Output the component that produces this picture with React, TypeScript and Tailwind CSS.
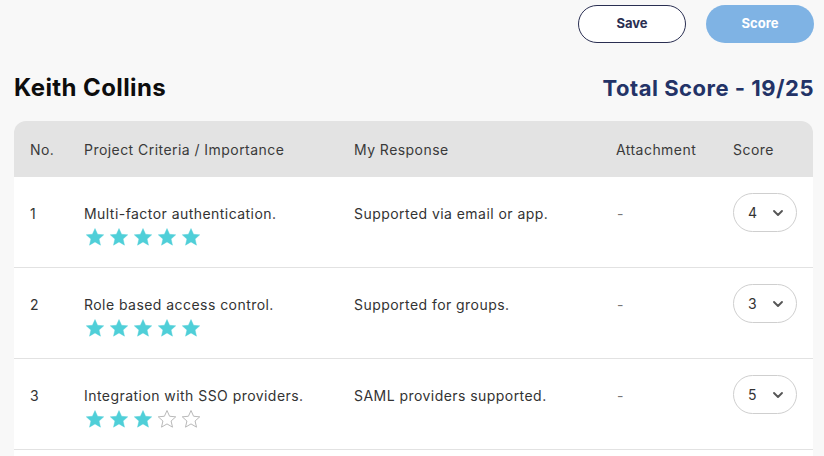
import React from "react";

const rows = [
  { no: "1", crit: "Multi-factor authentication.", stars: 5, resp: "Supported via email or app.", score: "4" },
  { no: "2", crit: "Role based access control.", stars: 5, resp: "Supported for groups.", score: "3" },
  { no: "3", crit: "Integration with SSO providers.", stars: 3, resp: "SAML providers supported.", score: "5" },
];

function Star({ filled }: { filled: boolean }) {
  return (
    <svg width="20" height="20" viewBox="0 0 24 24" className="shrink-0">
      <path
        d="M12 1.8l3.1 6.9 7.4.7-5.6 5 1.7 7.4L12 17.9l-6.6 3.9 1.7-7.4-5.6-5 7.4-.7z"
        fill={filled ? "#4fcfd8" : "none"}
        stroke={filled ? "#4fcfd8" : "#b9b9b9"}
        strokeWidth={filled ? 0.5 : 1.2}
        strokeLinejoin="round"
      />
    </svg>
  );
}

export default function App() {
  return (
    <div className="min-h-[456px] w-[824px] bg-[#f8f8f8] overflow-hidden" style={{ fontFamily: "Inter, 'Noto Sans', sans-serif" }}>
      <div className="flex justify-end gap-5 pt-[5px] pr-[10px]">
        <button className="h-[38px] w-[108px] rounded-full border border-[#2a2f52] bg-white text-[13px] font-bold text-[#2a2f52]">
          Save
        </button>
        <button className="h-[38px] w-[108px] rounded-full bg-[#7fb3e4] text-[13px] font-bold text-white">
          Score
        </button>
      </div>
      <div className="flex items-center justify-between pl-[14px] pr-[10px] mt-[27px]">
        <div className="text-[24px] font-bold text-[#0d0d0d] tracking-[0.4px]">Keith Collins</div>
        <div className="text-[22px] font-bold text-[#233367] tracking-[0.5px]">Total Score - 19/25</div>
      </div>
      <div className="ml-[14px] mt-[15px] w-[799px]">
        <div className="flex h-[56px] items-center rounded-t-[12px] bg-[#e3e3e3] text-[14px] tracking-[0.45px] text-[#3a3a3a]">
          <div className="w-[70px] pl-[16px]">No.</div>
          <div className="w-[270px]">Project Criteria / Importance</div>
          <div className="w-[262px]">My Response</div>
          <div className="w-[117px]">Attachment</div>
          <div className="w-[80px]">Score</div>
        </div>
        {rows.map((r) => (
          <div key={r.no} className="flex h-[91px] items-start border-b border-[#e2e2e2] bg-white text-[14px] tracking-[0.45px] text-[#333]">
            <div className="w-[70px] pl-[16px] pt-[26px]">{r.no}</div>
            <div className="w-[270px] pt-[26px]">
              <div>{r.crit}</div>
              <div className="mt-[3px] flex gap-[4px] pl-[1px]">
                {[0, 1, 2, 3, 4].map((i) => (
                  <Star key={i} filled={i < r.stars} />
                ))}
              </div>
            </div>
            <div className="w-[262px] pt-[26px]">{r.resp}</div>
            <div className="w-[117px] pt-[26px] pl-[1px] text-[#777]">-</div>
            <div className="w-[80px] pt-[16px]">
              <div className="flex h-[39px] w-[64px] items-center justify-between rounded-full border border-[#cfcfcf] bg-white pl-[14px] pr-[10px]">
                <span className="text-[14px] text-[#333]">{r.score}</span>
                <svg width="16" height="16" viewBox="0 0 24 24" fill="none" stroke="#555" strokeWidth="2.8" strokeLinecap="round" strokeLinejoin="round">
                  <path d="M6 9l6 6 6-6" />
                </svg>
              </div>
            </div>
          </div>
        ))}
        <div className="h-[20px] bg-white" />
      </div>
    </div>
  );
}
